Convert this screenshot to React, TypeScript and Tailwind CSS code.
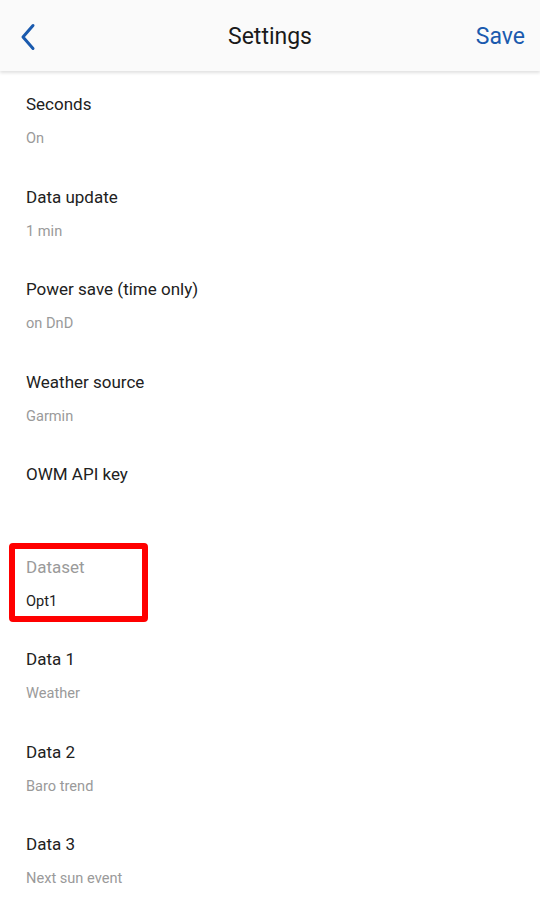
const items = [
  { title: "Seconds", value: "On" },
  { title: "Data update", value: "1 min" },
  { title: "Power save (time only)", value: "on DnD" },
  { title: "Weather source", value: "Garmin" },
  { title: "OWM API key", value: "" },
  { title: "Dataset", value: "Opt1", disabled: true, marked: true },
  { title: "Data 1", value: "Weather" },
  { title: "Data 2", value: "Baro trend" },
  { title: "Data 3", value: "Next sun event" },
];

const App = () => {
  return (
    <div className="w-[540px] h-[900px] overflow-hidden bg-white font-['Roboto',sans-serif]">
      <header className="relative z-10 h-[71px] bg-[#fafafa] shadow-[0_2px_3px_rgba(0,0,0,0.12)] flex items-center justify-between px-[18px]">
        <svg width="20" height="28" viewBox="0 0 20 28" className="ml-[1px] mt-[2px]">
          <path d="M14 2.5 L4 14 L14 25.5" fill="none" stroke="#1a5aae" strokeWidth="3" strokeLinecap="round" strokeLinejoin="round" />
        </svg>
        <h1 className="absolute left-1/2 -translate-x-1/2 pt-[2px] text-[23px] text-[#1a1a1a] leading-none">Settings</h1>
        <button className="pt-[2px] text-[23px] text-[#1a5aae] leading-none mr-[-3px]">Save</button>
      </header>
      <div className="flex flex-col">
        {items.map((it) => (
          <div key={it.title} className="relative h-[92.5px] pl-[26px] pt-[21px]">
            <div className={`text-[17px] leading-[24px] ${it.disabled ? "text-[#9a9a9a]" : "text-[#212121]"}`}>
              {it.title}
            </div>
            <div className={`mt-[12px] text-[14.6px] leading-[20px] ${it.disabled ? "text-[#212121]" : "text-[#9a9a9a]"}`}>
              {it.value}
            </div>
            {it.marked && (
              <div className="absolute left-[9px] top-[9px] w-[139px] h-[79px] border-[6px] border-[#ff0000] rounded-[4px]" />
            )}
          </div>
        ))}
      </div>
    </div>
  );
};

export default App;
